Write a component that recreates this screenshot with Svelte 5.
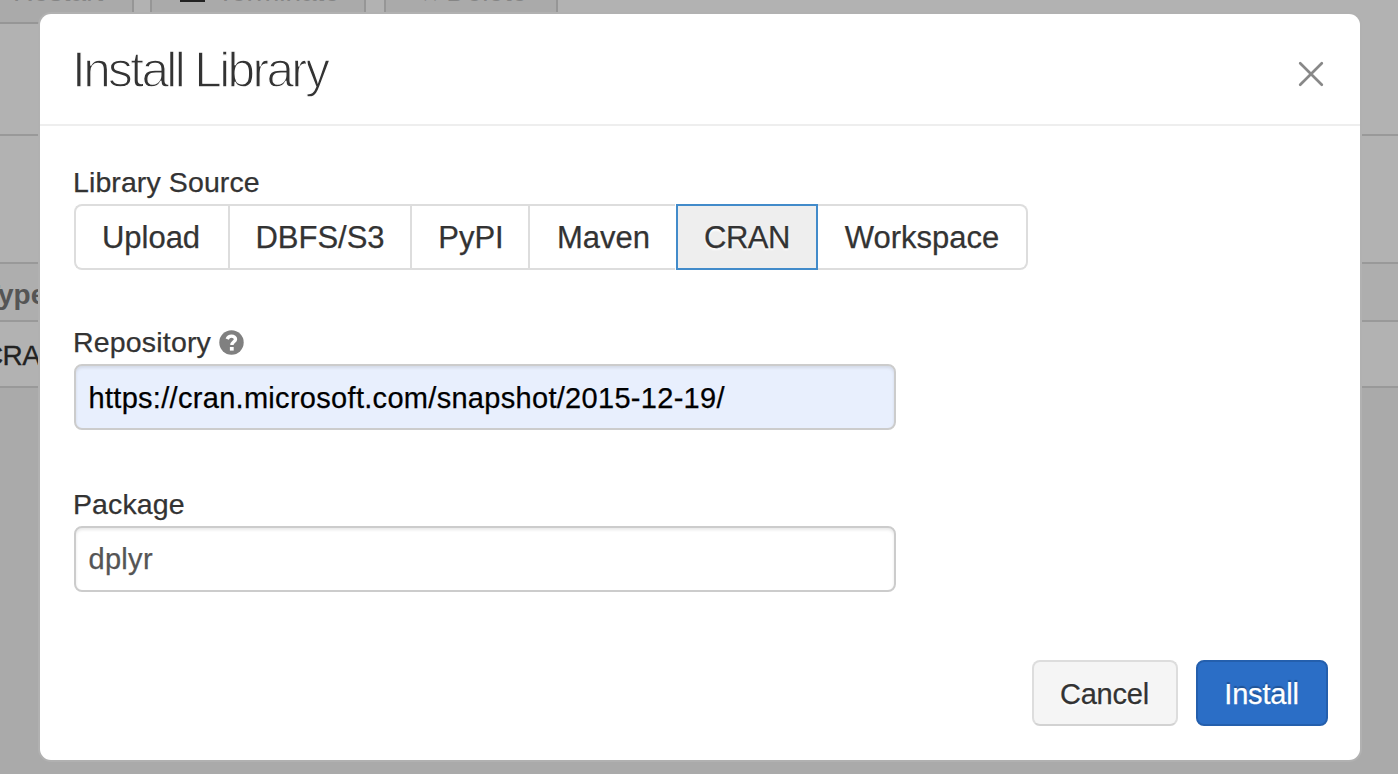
<script>
  const sources = ['Upload', 'DBFS/S3', 'PyPI', 'Maven', 'CRAN', 'Workspace'];
  const widths = [154, 182, 118, 147, 142, 210];
  let selected = $state('CRAN');
  let repository = $state('https://cran.microsoft.com/snapshot/2015-12-19/');
  let pkg = $state('dplyr');
</script>

<div class="page">
  <div class="toolbar">
    <div class="tool first"><span>Restart</span></div>
    <div class="tool second"><i></i><span>Terminate</span></div>
    <div class="tool third"><span>&times;</span><span>Delete</span></div>
  </div>
  <div class="band one"></div>
  <div class="band two"></div>
  <div class="band head"><b>Type</b></div>
  <div class="band row"><span>CRAN</span></div>
</div>

<div class="modal" role="dialog" aria-label="Install Library">
  <header>
    <h1>Install Library</h1>
    <button class="close" aria-label="Close">
      <svg width="26" height="26" viewBox="0 0 26 26"><path d="M2.2 2.2 23.8 23.8M23.8 2.2 2.2 23.8" /></svg>
    </button>
  </header>
  <main>
    <div class="label l1"><span>Library Source</span></div>
    <div class="group">
      {#each sources as s, i}
        <button class="seg" class:active={selected === s} style="width:{widths[i]}px" onclick={() => (selected = s)}>{s}</button>
      {/each}
    </div>
    <div class="label l2">
      <span>Repository</span>
      <svg class="help" width="25" height="25" viewBox="0 0 25 25">
        <circle cx="12.5" cy="12.5" r="12.2" />
        <path d="M8.2 9.2C9 7 10.5 6.1 12.5 6.1c2.3 0 4 1.3 4 3.2 0 2.4-3.6 2.6-3.6 5.6" />
        <rect x="10.9" y="17" width="3.8" height="3.6" />
      </svg>
    </div>
    <input class="repo" bind:value={repository} aria-label="Repository" />
    <div class="label l3"><span>Package</span></div>
    <input class="pkg" bind:value={pkg} aria-label="Package" />
  </main>
  <footer>
    <button class="btn cancel">Cancel</button>
    <button class="btn install">Install</button>
  </footer>
</div>

<style>
  :global(body) { margin: 0; background: #aaa; overflow: hidden; }
  .page, .modal, button, input { font-family: "Liberation Sans", Arial, sans-serif; }
  .page, .modal, .page *, .modal * { box-sizing: border-box; }
  .page { height: 774px; overflow: hidden; background: #aaa; color: #222; }
  .toolbar { height: 24px; display: flex; gap: 16px; background: #b2b2b2; overflow: hidden; }
  .tool { height: 24px; background: #aaa; border: 2px solid #969696; border-top: 0; font-size: 28px; line-height: 28px; color: #858585; white-space: nowrap; display: flex; }
  .tool span { display: block; margin-top: -22px; }
  .first { width: 134px; border-left: 0; padding-left: 13px; }
  .second { width: 216px; padding-left: 28px; }
  .second i { width: 25px; height: 2px; background: #222; margin-right: 12px; }
  .third { width: 174px; padding-left: 36px; margin-left: 2px; gap: 8px; }
  .third span:first-child { margin-top: -19px; }
  .band { background: #b2b2b2; border-bottom: 2px solid #999; overflow: hidden; white-space: nowrap; }
  .one { height: 112px; }
  .two { height: 128px; }
  .head { height: 58px; background: #aeaeae; font-size: 28px; line-height: 61px; color: #555; }
  .head b { margin-left: -17px; }
  .row { height: 66px; font-size: 28px; line-height: 67px; color: #222; -webkit-text-stroke: 0.3px; }
  .row span { margin-left: -17px; letter-spacing: -0.6px; }

  .modal { position: absolute; left: 40px; top: 14px; width: 1320px; height: 746px; border-radius: 11px; background: #fff; box-shadow: 0 0 0 2px #b1b1b1; display: flex; flex-direction: column; color: #333; }
  header { height: 112px; border-bottom: 2px solid #eee; display: flex; justify-content: space-between; padding: 0 36px 0 31px; }
  h1 { margin: 26px 0 0 1px; font-size: 49.5px; line-height: 59px; font-weight: 400; letter-spacing: -2.6px; -webkit-text-stroke: 1.3px #fff; white-space: nowrap; }
  .close { border: 0; padding: 0; background: none; height: 26px; margin-top: 47px; }
  .close svg { display: block; }
  .close path { stroke: #888; stroke-width: 2.7; stroke-linecap: round; fill: none; }
  main { padding: 40px 34px 0; flex: 1; }
  .label { height: 38px; font-size: 28.5px; line-height: 33px; letter-spacing: 0.1px; margin-left: -1px; display: flex; white-space: nowrap; -webkit-text-stroke: 0.25px; }
  .l2 { margin-top: 56px; letter-spacing: 0.18px; }
  .l3 { margin-top: 58px; }
  .group { height: 66px; display: flex; }
  .seg { height: 66px; padding: 1px 0 0; border: 2px solid #ddd; border-right: 0; background: #fff; font-size: 31px; color: #333; line-height: 62px; white-space: nowrap; -webkit-text-stroke: 0.25px; }
  .seg:first-child { border-radius: 8px 0 0 8px; padding-right: 2px; }
  .seg:nth-child(3), .seg:nth-child(4) { padding-left: 2px; }
  .seg:last-child { border-radius: 0 8px 8px 0; border-right: 2px solid #ddd; border-left: 0; }
  .seg.active { background: #eee; border: 2px solid #428bca; letter-spacing: -0.5px; text-shadow: 0 2px 2px #fff; }
  .seg:nth-child(n + 5) { position: relative; left: 1px; }
  .help { margin: 4px 0 0 8px; }
  .help circle { fill: #808080; }
  .help rect { fill: #fff; }
  .help path { stroke: #fff; stroke-width: 3.4; fill: none; }
  input { display: block; width: 822px; height: 66px; border: 2px solid #ccc; border-radius: 8px; font-size: 29px; letter-spacing: 0.3px; padding: 2px 12px 0 12.5px; outline: 0; box-shadow: inset 0 2px 3px rgba(0,0,0,.09); background: #fff; color: #555; -webkit-text-stroke: 0.25px; }
  .repo { background: #e8effd; color: #000; }
  .pkg { padding-top: 0; }
  footer { display: flex; justify-content: flex-end; gap: 18px; padding: 0 32px 34px; }
  .btn { height: 66px; border-radius: 8px; border: 2px solid #ddd; background: #f5f5f5; font-size: 29px; letter-spacing: -0.2px; color: #333; padding: 2px 1px 0 0; text-shadow: 0 2px 2px #fff; -webkit-text-stroke: 0.25px; }
  .cancel { width: 146px; border-bottom-color: #d2d2d2; }
  .install { width: 132px; background: #2b6ec6; border-color: #245fad; color: #fff; text-shadow: 0 -2px 1px rgba(0,0,0,.25); }
</style>
